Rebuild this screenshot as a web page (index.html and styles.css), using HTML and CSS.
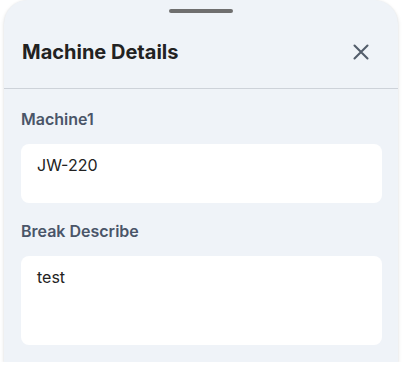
FILE: index.html
```html
<!DOCTYPE html>
<html>
<head>
<meta charset="utf-8">
<link rel="stylesheet" href="styles.css">
</head>
<body>
<div class="sheet">
  <div class="header">
    <div class="handle"></div>
    <div class="title-row">
      <h1 class="title">Machine Details</h1>
      <button class="close" aria-label="Close">
        <svg width="16" height="16" viewBox="0 0 16 16"><path d="M1.5 1.5L14.5 14.5M14.5 1.5L1.5 14.5" stroke="#535d6b" stroke-width="2.1" stroke-linecap="round"/></svg>
      </button>
    </div>
  </div>
  <div class="body">
    <div class="field">
      <div class="label">Machine1</div>
      <div class="box input">JW-220</div>
    </div>
    <div class="field">
      <div class="label">Break Describe</div>
      <div class="box area">test</div>
    </div>
  </div>
</div>
</body>
</html>
```
FILE: styles.css
```css
html, body {
  margin: 0;
  padding: 0;
  background: #ffffff;
  font-family: Inter, "Noto Sans", sans-serif;
}
.sheet {
  margin: 0 5px 0 4px;
  height: 362px;
  background: #eff3f8;
  border-radius: 24px 24px 0 0;
  box-shadow: 0 2px 4px rgba(0, 0, 0, 0.12), 0 0 2px rgba(0, 0, 0, 0.06);
  display: flex;
  flex-direction: column;
}
.header {
  height: 88px;
  border-bottom: 1px solid #cdd2d9;
  display: flex;
  flex-direction: column;
  align-items: center;
}
.handle {
  margin-top: 9px;
  width: 64px;
  height: 4px;
  border-radius: 2px;
  background: #6f6f6f;
}
.title-row {
  align-self: stretch;
  display: flex;
  align-items: center;
  justify-content: space-between;
  padding: 0 29px 0 18px;
  margin-top: 25px;
}
.title {
  margin: 0;
  font-size: 20px;
  font-weight: 700;
  color: #222222;
  line-height: 28px;
}
.close {
  border: 0;
  background: none;
  padding: 0;
  width: 16px;
  height: 16px;
  display: flex;
}
.body {
  padding: 20px 16px 0 17px;
  display: flex;
  flex-direction: column;
  gap: 18px;
}
.field {
  display: flex;
  flex-direction: column;
  gap: 15px;
}
.label {
  font-size: 16px;
  font-weight: 600;
  color: #4a5568;
  line-height: 20px;
}
.box {
  box-sizing: border-box;
  background: #ffffff;
  border-radius: 8px;
  padding: 11px 16px 0;
  font-size: 16px;
  color: #222222;
  line-height: 20px;
}
.input {
  height: 59px;
}
.area {
  height: 89px;
}
```
